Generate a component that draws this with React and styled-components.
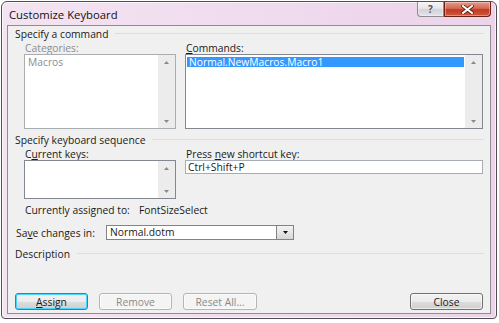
import styled, { createGlobalStyle } from "styled-components"

const GlobalStyle = createGlobalStyle`
  html, body {
    margin : 0;
    background : #ffffff;
  }
  body {
    font-family : "Open Sans", "Liberation Sans", sans-serif;
    font-size : 10.3px;
    color : #1a1a1a;
  }
  u { text-decoration-thickness : 1px; text-underline-offset : 1px; }
`

const Window = styled.div`
    box-sizing : border-box;
    margin : 1px 0 0 1px;
    width : 496px;
    height : 318px;
    border : 1px solid #4e4e55;
    border-radius : 6px 6px 4px 4px;
    background : linear-gradient(90deg, #f3e4f1 0%, #f1dcef 45%, #ecd3ea 100%);
    box-shadow : inset 0 0 0 1px rgba(255,255,255,0.7);
    display : flex;
    flex-direction : column;
    padding : 0 5px 4px 5px;
`
const TitleBar = styled.div`
    height : 23px;
    display : flex;
    align-items : flex-start;
`
const Title = styled.div`
    font-size : 11.3px;
    line-height : 14px;
    padding : 6px 0 0 2px;
    color : #111;
`
const Caption = styled.div`
    margin-left : auto;
    display : flex;
`
const CapButton = styled.div`
    box-sizing : border-box;
    height : 15px;
    width : ${p => p.$w}px;
    display : flex;
    align-items : center;
    justify-content : center;
    border : 1px solid ${p => p.$close ? "#6a2216" : "#8a8a8f"};
    border-top : none;
    border-radius : ${p => p.$close ? "0 0 4px 0" : "0 0 0 4px"};
    background : ${p => p.$close
        ? "linear-gradient(180deg, #e39c8d 0%, #d66a52 45%, #c03a20 55%, #cc5a40 100%)"
        : "linear-gradient(180deg, #f6f6f8 0%, #e6e6ea 45%, #d2d2d8 55%, #e3e3e8 100%)"};
    box-shadow : inset 0 0 0 1px rgba(255,255,255,0.35);
    color : #555;
    font-size : 10px;
    font-weight : 700;
`
const Client = styled.div`
    flex : 1;
    box-sizing : border-box;
    border : 1px solid #8d8d93;
    background : #f0f0f0;
    display : flex;
    flex-direction : column;
    padding : 1px 6px 3px 6px;
`
const GroupHeader = styled.div`
    display : flex;
    align-items : center;
    height : 13px;
    margin-top : ${p => p.$mt || 0}px;
    span { white-space : nowrap; padding-left : 1px; }
    &::after {
        content : "";
        flex : 1;
        height : 1px;
        margin : 0 0 0 7px;
        background : #d5dfe5;
    }
`
const Columns = styled.div`
    display : flex;
    gap : 9px;
    padding-left : 10px;
    margin-top : 2px;
`
const Column = styled.div`
    display : flex;
    flex-direction : column;
    width : ${p => p.$w}px;
`
const Label = styled.div`
    height : 12px;
    line-height : 12px;
    padding-left : 1px;
    color : ${p => p.$disabled ? "#8d8d8d" : "#1a1a1a"};
`
const ListBox = styled.div`
    box-sizing : border-box;
    height : ${p => p.$h}px;
    border : 1px solid ${p => p.$disabled ? "#a9aeb3" : "#828790"};
    background : #fff;
    display : flex;
`
const ListItems = styled.div`
    flex : 1;
    padding : 1px;
`
const Item = styled.div`
    height : 10px;
    line-height : 10px;
    padding-left : 2px;
    color : ${p => p.$disabled ? "#8d8d8d" : p.$selected ? "#fff" : "#1a1a1a"};
    background : ${p => p.$selected ? "#3399ff" : "transparent"};
    margin-top : 1px;
`
const ScrollBar = styled.div`
    width : 17px;
    background : #ececec;
    display : flex;
    flex-direction : column;
    justify-content : space-between;
    align-items : center;
    padding : 6px 0 5px;
    box-sizing : border-box;
`
const TextInput = styled.div`
    box-sizing : border-box;
    height : 14px;
    line-height : 12px;
    border : 1px solid #a5acb5;
    background : #fff;
    padding-left : 2px;
`
const AssignedRow = styled.div`
    display : flex;
    height : 12px;
    line-height : 12px;
    margin-top : 5px;
    padding-left : 11px;
`
const AssignedLabel = styled.div`
    width : 114px;
`
const SaveRow = styled.div`
    display : flex;
    align-items : center;
    margin-top : 9px;
    padding-left : 2px;
`
const SaveLabel = styled.div`
    width : 90px;
    padding-top : 1px;
`
const Combo = styled.div`
    box-sizing : border-box;
    display : flex;
    width : 188px;
    height : 15px;
    border : 1px solid #838383;
    background : #fff;
`
const ComboText = styled.div`
    flex : 1;
    line-height : 13px;
    padding-left : 3px;
`
const ComboButton = styled.div`
    width : 16px;
    border-left : 1px solid #838383;
    background : linear-gradient(180deg, #f4f4f4 0%, #e6e6e6 50%, #d6d6d6 100%);
    display : flex;
    align-items : center;
    justify-content : center;
`
const ButtonRow = styled.div`
    margin-top : auto;
    display : flex;
    gap : 11px;
    padding : 0 1px;
`
const Button = styled.div`
    box-sizing : border-box;
    width : ${p => p.$w || 73}px;
    height : 17px;
    border-radius : 3px;
    display : flex;
    align-items : center;
    justify-content : center;
    border : 1px solid ${p => p.$focus ? "#3c7fb1" : p.$disabled ? "#b1b6ba" : "#707070"};
    color : ${p => p.$disabled ? "#8a8a8a" : "#1a1a1a"};
    background : ${p => p.$disabled
        ? "#f4f4f4"
        : "linear-gradient(180deg, #f2f2f2 0%, #ebebeb 50%, #dddddd 51%, #cfcfcf 100%)"};
    box-shadow : ${p => p.$focus ? "inset 0 0 0 1px #48d4ff" : "inset 0 0 0 1px rgba(255,255,255,0.6)"};
    ${p => p.$right && "margin-left : auto;"}
`

const Arrow = ({ down, color = "#5a5a5a" }) => (
  <svg width="5" height="3" viewBox="0 0 5 3">
    <path d={down ? "M0 0H5L2.5 3Z" : "M0 3H5L2.5 0Z"} fill={color} />
  </svg>
)

const Scroll = ({ color }) => (
  <ScrollBar>
    <Arrow color={color} />
    <Arrow down color={color} />
  </ScrollBar>
)

const App = () => {
  return (
    <>
      <GlobalStyle />
      <Window>
        <TitleBar>
          <Title>Customize Keyboard</Title>
          <Caption>
            <CapButton $w={27}>?</CapButton>
            <CapButton $w={47} $close>
              <svg width="13" height="9" viewBox="0 0 13 9">
                <path d="M2 1L11 8M11 1L2 8" stroke="#5a1a10" strokeWidth="3.6" strokeLinecap="square" />
                <path d="M2 1L11 8M11 1L2 8" stroke="#ffffff" strokeWidth="2" strokeLinecap="square" />
              </svg>
            </CapButton>
          </Caption>
        </TitleBar>
        <Client>
          <GroupHeader $mt={0}><span>Specify a command</span></GroupHeader>
          <Columns>
            <Column $w={152}>
              <Label $disabled>Categories:</Label>
              <ListBox $h={75} $disabled>
                <ListItems>
                  <Item $disabled>Macros</Item>
                </ListItems>
                <Scroll color="#8a8a8a" />
              </ListBox>
            </Column>
            <Column $w={298}>
              <Label><u>C</u>ommands:</Label>
              <ListBox $h={75}>
                <ListItems>
                  <Item $selected>Normal.NewMacros.Macro1</Item>
                </ListItems>
                <Scroll color="#8a8a8a" />
              </ListBox>
            </Column>
          </Columns>
          <GroupHeader $mt={4}><span>Specify keyboard sequence</span></GroupHeader>
          <Columns>
            <Column $w={152}>
              <Label>C<u>u</u>rrent keys:</Label>
              <ListBox $h={39}>
                <ListItems />
                <Scroll color="#8a8a8a" />
              </ListBox>
            </Column>
            <Column $w={298}>
              <Label>Press <u>n</u>ew shortcut key:</Label>
              <TextInput>Ctrl+Shift+P</TextInput>
            </Column>
          </Columns>
          <AssignedRow>
            <AssignedLabel>Currently assigned to:</AssignedLabel>
            <div>FontSizeSelect</div>
          </AssignedRow>
          <SaveRow>
            <SaveLabel>Sa<u>v</u>e changes in:</SaveLabel>
            <Combo>
              <ComboText>Normal.dotm</ComboText>
              <ComboButton><Arrow down color="#111" /></ComboButton>
            </Combo>
          </SaveRow>
          <GroupHeader $mt={7}><span>Description</span></GroupHeader>
          <ButtonRow>
            <Button $focus><span><u>A</u>ssign</span></Button>
            <Button $disabled>Remove</Button>
            <Button $disabled $w={74}>Reset All...</Button>
            <Button $right>Close</Button>
          </ButtonRow>
        </Client>
      </Window>
    </>
  )
}

export default App
